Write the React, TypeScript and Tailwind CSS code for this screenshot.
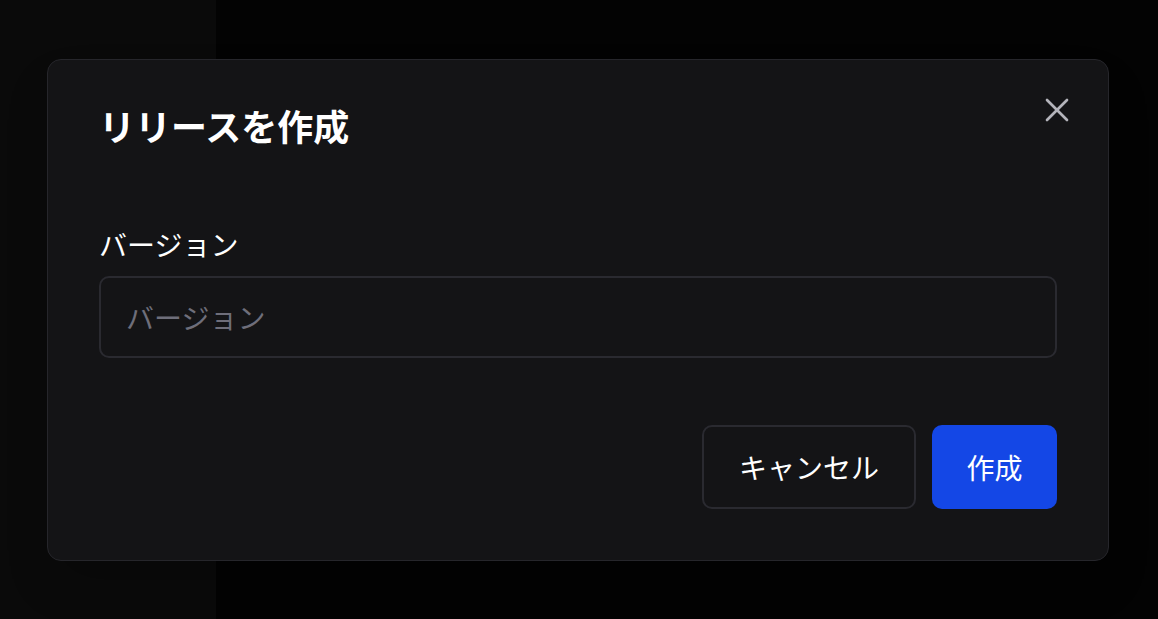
import { X } from 'lucide-react';

export default function App() {
  return (
    <div
      className="relative flex h-[619px] w-[1158px] overflow-hidden bg-[#030303]"
      style={{ fontFamily: '"Noto Sans CJK JP", "Noto Sans", sans-serif' }}
    >
      {/* Background page */}
      <div className="h-full w-[216px] bg-[#0a0a0a]" />
      <div className="h-full flex-1 bg-[#030303]" />

      {/* Dialog */}
      <div className="absolute inset-0 flex items-start">
        <div className="relative ml-[47px] mt-[59px] w-[1062px] rounded-[14px] border border-[#26262b] bg-[#141416] px-[51px] pt-[43px] pb-[51px] shadow-2xl">
          <button className="absolute right-[31px] top-[30px] text-[#b4b4bb]">
            <X className="h-[40px] w-[40px]" strokeWidth={1.6} />
          </button>

          <h2 className="text-[36px] font-bold leading-[44px] text-white">リリースを作成</h2>

          <label className="mt-[77px] block text-[28px] leading-[40px] text-white">バージョン</label>
          <input
            placeholder="バージョン"
            className="mt-[12px] block h-[82px] w-full rounded-[10px] border-2 border-[#2a2a30] bg-transparent px-[25px] text-[28px] text-white outline-none placeholder:text-[#6e6e7a]"
          />

          <div className="mt-[67px] flex justify-end gap-[16px]">
            <button className="h-[84px] w-[214px] rounded-[10px] border-2 border-[#2a2a30] text-[28px] text-white">
              キャンセル
            </button>
            <button className="h-[84px] w-[125px] rounded-[10px] bg-[#1447e6] text-[28px] text-white">
              作成
            </button>
          </div>
        </div>
      </div>
    </div>
  );
}
